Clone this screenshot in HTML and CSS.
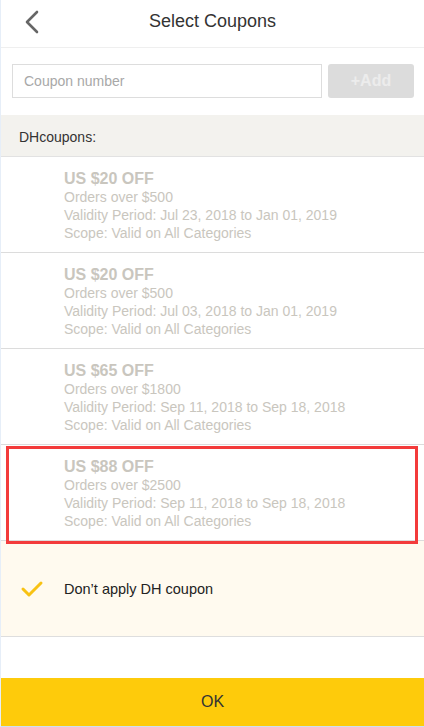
FILE: index.html
```html
<!DOCTYPE html>
<html>
<head>
<meta charset="utf-8">
<link rel="stylesheet" href="styles.css">
</head>
<body>
<div class="page">
  <header class="topbar">
    <svg class="back" width="16" height="24" viewBox="0 0 16 24"><path d="M13 2 L3 12 L13 22" fill="none" stroke="#666" stroke-width="2.6" stroke-linecap="round" stroke-linejoin="round"/></svg>
    <h1 class="title">Select Coupons</h1>
  </header>
  <div class="addrow">
    <input class="code" type="text" placeholder="Coupon number">
    <button class="add">+Add</button>
  </div>
  <div class="section">DHcoupons:</div>
  <ul class="list">
    <li class="coupon">
      <div class="amt">US $20 OFF</div>
      <div class="line">Orders over $500</div>
      <div class="line">Validity Period: Jul 23, 2018 to Jan 01, 2019</div>
      <div class="line">Scope: Valid on All Categories</div>
    </li>
    <li class="coupon">
      <div class="amt">US $20 OFF</div>
      <div class="line">Orders over $500</div>
      <div class="line">Validity Period: Jul 03, 2018 to Jan 01, 2019</div>
      <div class="line">Scope: Valid on All Categories</div>
    </li>
    <li class="coupon">
      <div class="amt">US $65 OFF</div>
      <div class="line">Orders over $1800</div>
      <div class="line">Validity Period: Sep 11, 2018 to Sep 18, 2018</div>
      <div class="line">Scope: Valid on All Categories</div>
    </li>
    <li class="coupon marked">
      <div class="amt">US $88 OFF</div>
      <div class="line">Orders over $2500</div>
      <div class="line">Validity Period: Sep 11, 2018 to Sep 18, 2018</div>
      <div class="line">Scope: Valid on All Categories</div>
    </li>
  </ul>
  <div class="noapply">
    <svg class="check" width="24" height="20" viewBox="0 0 24 20"><path d="M3 10 L9 16 L21 4" fill="none" stroke="#f8c214" stroke-width="3" stroke-linecap="round" stroke-linejoin="round"/></svg>
    <span>Don’t apply DH coupon</span>
  </div>
  <div class="spacer"></div>
  <button class="ok">OK</button>
</div>
</body>
</html>
```
FILE: styles.css
```css
* { box-sizing: border-box; }
html, body { margin: 0; padding: 0; }
body {
  font-family: "Liberation Sans", Arial, sans-serif;
  background: #fff;
  width: 424px;
  height: 727px;
  overflow: hidden;
}
.page {
  height: 727px;
  display: flex;
  flex-direction: column;
  border-left: 1px solid #e6eef8;
  border-bottom: 1px solid #cfe0f2;
}
.topbar {
  height: 48px;
  flex: none;
  display: flex;
  align-items: center;
  justify-content: center;
  position: relative;
  border-bottom: 1px solid #efefef;
  padding-bottom: 4px;
}
.back { position: absolute; left: 23px; top: 10px; }
.title {
  margin: 0;
  font-size: 18px;
  font-weight: normal;
  color: #333;
}
.addrow {
  display: flex;
  gap: 6px;
  padding: 16px 10px 17px 11px;
  flex: none;
}
.code {
  flex: 1;
  height: 34px;
  border: 1px solid #ddd;
  border-radius: 0;
  padding: 0 11px;
  font-family: inherit;
  font-size: 14px;
  color: #333;
  outline: none;
}
.code::placeholder { color: #a8a8a8; }
.add {
  width: 86px;
  height: 34px;
  border: none;
  border-radius: 3px;
  background: #dcdcdc;
  color: #ececec;
  font-family: inherit;
  font-size: 16px;
  font-weight: bold;
}
.section {
  background: #f3f2ee;
  height: 42px;
  flex: none;
  display: flex;
  align-items: center;
  padding: 3px 0 0 18px;
  font-size: 14px;
  color: #333;
  border-bottom: 1px solid #e2e2e2;
}
.list { list-style: none; margin: 0; padding: 0; flex: none; }
.coupon {
  height: 96px;
  border-bottom: 1px solid #dcdcdc;
  padding: 12px 0 0 63px;
  color: #c9c6be;
}
.coupon.marked { position: relative; }
.coupon.marked::after {
  content: "";
  position: absolute;
  left: 5px;
  top: 1px;
  width: 406px;
  height: 92px;
  border: 3px solid #f33b3b;
}
.amt {
  font-size: 16px;
  font-weight: bold;
  line-height: 19px;
}
.line {
  font-size: 14px;
  line-height: 18px;
}
.noapply {
  height: 96px;
  flex: none;
  background: #fffaef;
  border-bottom: 1px solid #dedede;
  display: flex;
  align-items: center;
  padding-left: 19px;
  gap: 20px;
  font-size: 14.5px;
  color: #222;
}
.spacer { flex: 1; }
.ok {
  flex: none;
  height: 48px;
  border: none;
  background: #fecb0b;
  font-family: inherit;
  font-size: 16px;
  color: #333;
  width: 100%;
}
```
